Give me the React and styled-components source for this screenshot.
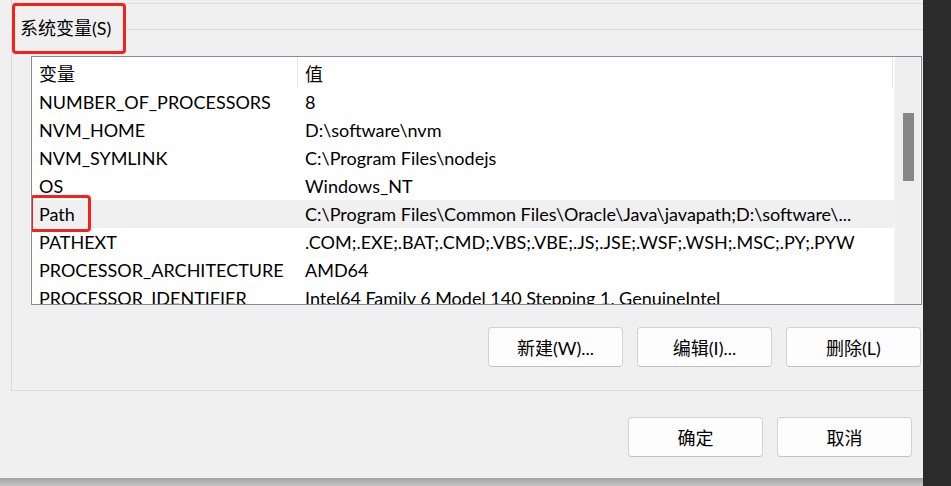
import React from 'react'
import styled, { createGlobalStyle } from 'styled-components'

const GlobalStyle = createGlobalStyle`
  html, body {
    margin: 0;
    padding: 0;
    background: #2b2b2b;
  }
  body {
    font-family: Lato, "Noto Sans CJK SC", sans-serif;
    font-size: 18px;
    color: #000;
  }
`

const Screen = styled.div`
  display: flex;
  width: 951px;
  height: 486px;
  overflow: hidden;
  background: #2b2b2b;
`

const WindowColumn = styled.div`
  display: flex;
  flex-direction: column;
  width: 923px;
`

const Window = styled.div`
  position: relative;
  display: flex;
  flex-direction: column;
  height: 478px;
  background: #f0f0f0;
`

const Shadow = styled.div`
  flex: 1;
  background: linear-gradient(#a2a2a2, #c6c6c6);
`

const UpperGroupTail = styled.div`
  height: 3px;
  margin-left: 11px;
  border-left: 1px solid #dadada;
  border-bottom: 1px solid #dadada;
`

const GroupBox = styled.div`
  display: flex;
  flex-direction: column;
  margin: 25px 0 0 11px;
  padding: 26px 1px 23px 19px;
  border: 1px solid #dadada;
  border-right: none;
`

const Callout = styled.div`
  position: absolute;
  z-index: 2;
  border: 3px solid #f5221b;
  border-radius: 4px;
  box-sizing: border-box;
`

const TitleCallout = styled(Callout)`
  left: 12px;
  top: 3px;
  width: 114px;
  height: 51px;
  background: #f0f0f0;
  display: flex;
  align-items: center;
  padding: 0 0 0 5px;
`

const GroupTitle = styled.span`
  line-height: 24px;
  margin-top: -1px;
`

const ListBox = styled.div`
  display: flex;
  height: 249px;
  box-sizing: border-box;
  border: 1px solid #868a93;
  background: #fff;
`

const Table = styled.div`
  display: flex;
  flex-direction: column;
  width: 862px;
  overflow: hidden;
`

const Row = styled.div`
  position: relative;
  display: grid;
  grid-template-columns: 266px 595px;
  height: ${(p) => (p.$header ? 31 : 28)}px;
  flex-shrink: 0;
  background: ${(p) => (p.$selected ? '#f0f0f0' : '#fff')};
`

const Cell = styled.div`
  display: flex;
  align-items: center;
  padding-left: 7px;
  white-space: nowrap;
  overflow: hidden;
  border-right: 1px solid ${(p) => (p.$header ? '#e5e5e5' : 'transparent')};
`

const PathCallout = styled(Callout)`
  left: -2px;
  top: -5px;
  width: 61px;
  height: 37px;
`

const Scrollbar = styled.div`
  position: relative;
  width: 26px;
  background: #efefef;
  border-left: 1px solid #f7f7f7;
  display: flex;
  justify-content: center;
  padding-top: 56px;
  box-sizing: border-box;
`

const Thumb = styled.div`
  width: 11px;
  height: 68px;
  background: #878787;
  margin-left: 2px;
`

const ButtonRow = styled.div`
  display: flex;
  justify-content: flex-end;
  gap: 14px;
  margin-top: 22px;
  padding-right: ${(p) => p.$right}px;
`

const Button = styled.button`
  width: 135px;
  height: 40px;
  background: #fdfdfd;
  border: 1px solid #d2d2d2;
  border-bottom-color: #c2c2c2;
  border-radius: 4px;
  font-family: inherit;
  font-size: 18px;
  color: #000;
  padding: 0;
`

const Footer = styled(ButtonRow)`
  margin-top: 26px;
`

const rows = [
  ['NUMBER_OF_PROCESSORS', '8'],
  ['NVM_HOME', 'D:\\software\\nvm'],
  ['NVM_SYMLINK', 'C:\\Program Files\\nodejs'],
  ['OS', 'Windows_NT'],
  ['Path', 'C:\\Program Files\\Common Files\\Oracle\\Java\\javapath;D:\\software\\...'],
  ['PATHEXT', '.COM;.EXE;.BAT;.CMD;.VBS;.VBE;.JS;.JSE;.WSF;.WSH;.MSC;.PY;.PYW'],
  ['PROCESSOR_ARCHITECTURE', 'AMD64'],
  ['PROCESSOR_IDENTIFIER', 'Intel64 Family 6 Model 140 Stepping 1, GenuineIntel'],
]

const App = () => {
  return (
    <Screen>
      <GlobalStyle />
      <WindowColumn>
        <Window>
          <UpperGroupTail />
          <TitleCallout>
            <GroupTitle>系统变量(S)</GroupTitle>
          </TitleCallout>
          <GroupBox>
            <ListBox>
              <Table>
                <Row $header>
                  <Cell $header>变量</Cell>
                  <Cell $header>值</Cell>
                </Row>
                {rows.map(([name, value]) => (
                  <Row key={name} $selected={name === 'Path'}>
                    <Cell>{name}</Cell>
                    <Cell>{value}</Cell>
                    {name === 'Path' && <PathCallout />}
                  </Row>
                ))}
              </Table>
              <Scrollbar>
                <Thumb />
              </Scrollbar>
            </ListBox>
            <ButtonRow $right={1}>
              <Button>新建(W)...</Button>
              <Button>编辑(I)...</Button>
              <Button>删除(L)</Button>
            </ButtonRow>
          </GroupBox>
          <Footer $right={11}>
            <Button>确定</Button>
            <Button>取消</Button>
          </Footer>
        </Window>
        <Shadow />
      </WindowColumn>
    </Screen>
  )
}

export default App
